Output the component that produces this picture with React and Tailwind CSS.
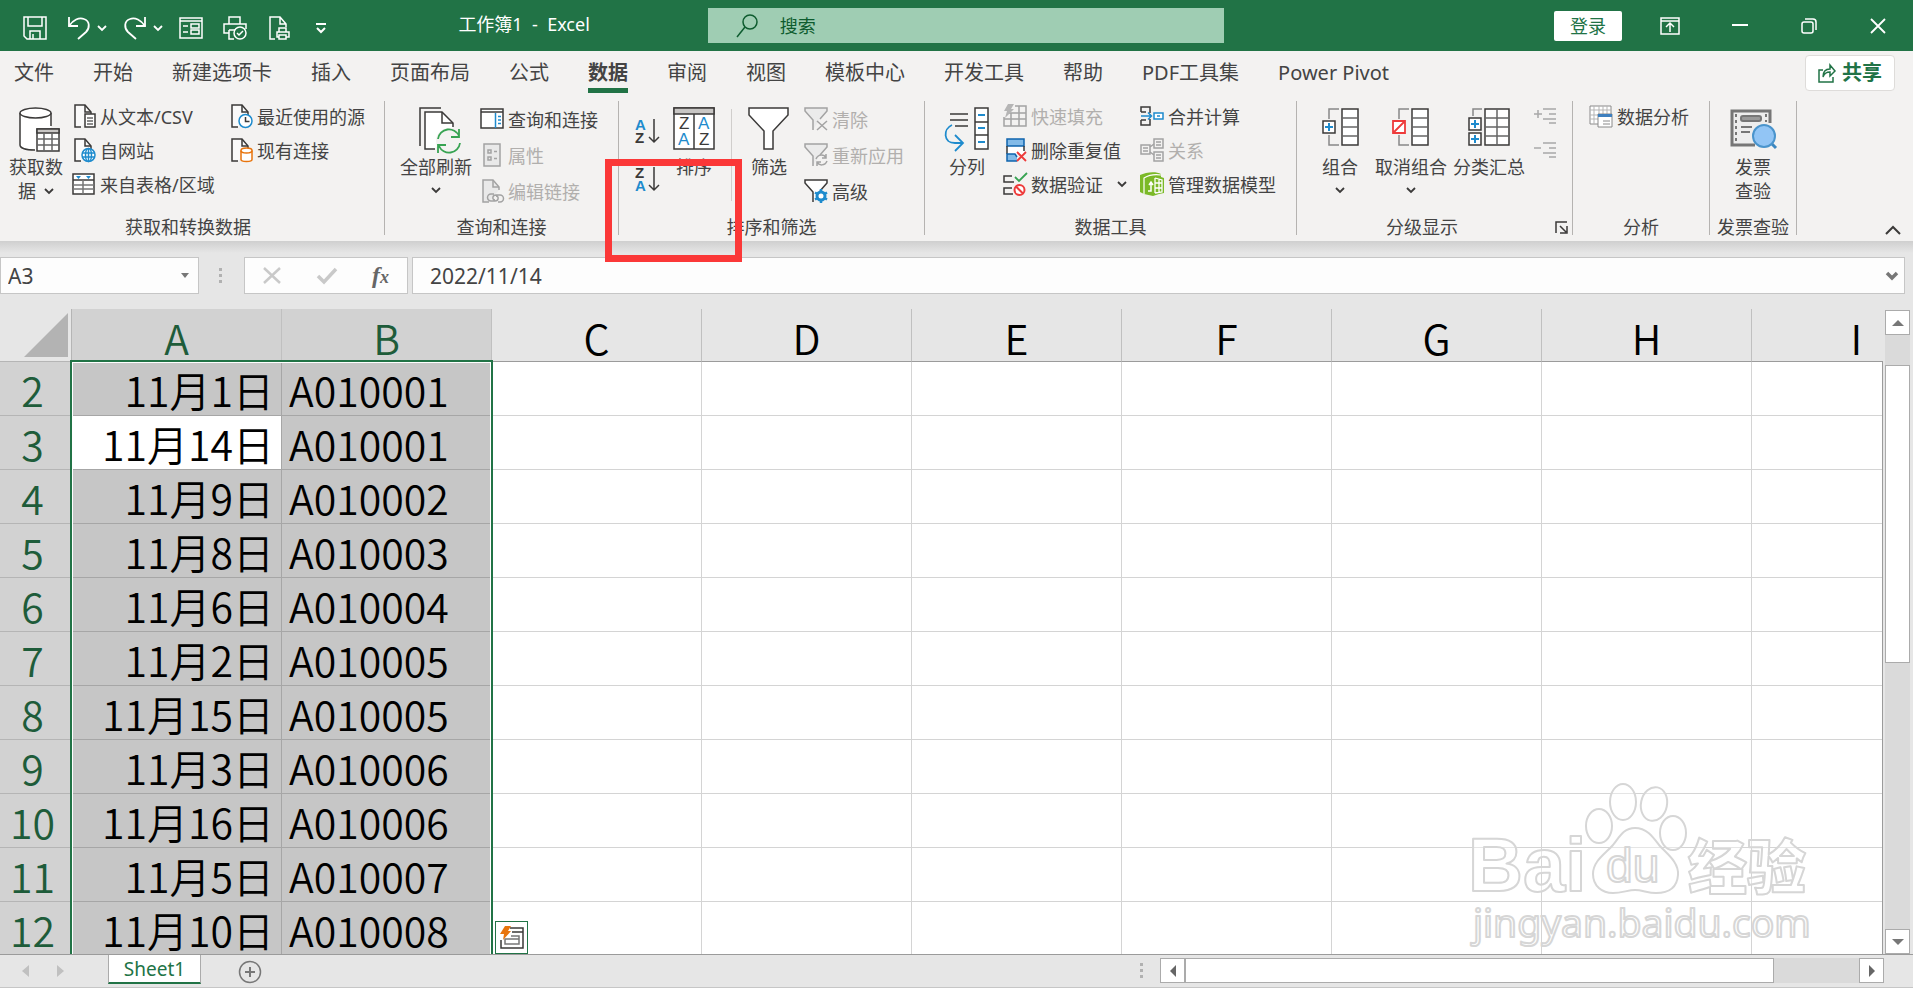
import { useState } from 'react';

const UI_FONT = "font-['Noto_Sans','Noto_Sans_CJK_SC',sans-serif]";
const CELL_FONT = "font-['Noto_Sans_CJK_SC_DemiLight','Noto_Sans_CJK_SC',sans-serif]";

const tabs = [
    '文件', '开始', '新建选项卡', '插入', '页面布局', '公式', '数据', '审阅',
    '视图', '模板中心', '开发工具', '帮助', 'PDF工具集', 'Power Pivot',
];

const columns = ['A', 'B', 'C', 'D', 'E', 'F', 'G', 'H', 'I'];

const rows = [
    { n: 2, date: '11月1日', code: 'A010001' },
    { n: 3, date: '11月14日', code: 'A010001' },
    { n: 4, date: '11月9日', code: 'A010002' },
    { n: 5, date: '11月8日', code: 'A010003' },
    { n: 6, date: '11月6日', code: 'A010004' },
    { n: 7, date: '11月2日', code: 'A010005' },
    { n: 8, date: '11月15日', code: 'A010005' },
    { n: 9, date: '11月3日', code: 'A010006' },
    { n: 10, date: '11月16日', code: 'A010006' },
    { n: 11, date: '11月5日', code: 'A010007' },
    { n: 12, date: '11月10日', code: 'A010008' },
];

const DARK = '#3b3a39';
const BLUE = '#1e8bcd';
const GRAY = '#a3a3a3';
const GREEN = '#37a352';
const RED = '#ee3b3b';

const Svg = ({ size = 24, w, h, children, stroke = DARK, sw = 1.5 }) => (
    <svg
        width={w || size}
        height={h || size}
        viewBox={`0 0 ${w || size} ${h || size}`}
        fill="none"
        stroke={stroke}
        strokeWidth={sw}
        className="shrink-0 overflow-visible"
        aria-hidden="true"
    >
        {children}
    </svg>
);

const Chevron = ({ color = DARK }) => (
    <Svg w={10} h={8} stroke={color} sw={1.8}>
        <path d="M1 2l4 4 4-4" />
    </Svg>
);

/* ---------- title bar icons ---------- */

const SaveIcon = () => (
    <Svg stroke="#fff">
        <path d="M1 1h22v22H4l-3-3z" />
        <path d="M5 1v9h14V1M7 23v-8h10v8" />
        <path d="M10 18v5" />
    </Svg>
);

const UndoIcon = () => (
    <Svg stroke="#fff" sw={1.8}>
        <path d="M2 1v9h9" />
        <path d="M2 10C6 4 12 1 17 3c6 2 6 9 2 13l-8 7" />
    </Svg>
);

const RedoIcon = () => (
    <Svg stroke="#fff" sw={1.8}>
        <path d="M22 1v9h-9" />
        <path d="M22 10C18 4 12 1 7 3c-6 2-6 9-2 13l8 7" />
    </Svg>
);

const FormIcon = () => (
    <Svg stroke="#fff">
        <path d="M1 2h22v20H1zM1 5h22" />
        <path d="M4 10h5M4 16h5M12 8h8v4h-8zM12 14h8v4h-8z" />
    </Svg>
);

const PrintPreviewIcon = () => (
    <Svg stroke="#fff">
        <path d="M6 8V1h11v7M6 17H1V8h22v5M6 14v9h5M6 14h6" />
        <circle cx="17" cy="17" r="6" />
        <path d="M14 17l2 2 4-4" />
    </Svg>
);

const QuickPrintIcon = () => (
    <Svg stroke="#fff">
        <path d="M8 23H3V1h10l6 7v3M13 1v7h6" />
        <path d="M12 16v-4h7v4M12 21h-2v-5h12v5h-3M12 19h7v4h-7z" />
    </Svg>
);

/* ---------- small ribbon icons ---------- */

const DocBase = ({ stroke = DARK, fill = '#fafafa' }) => (
    <>
        <path d="M9 23H3V1h10l6 7v3" fill={fill} stroke={stroke} />
        <path d="M13 1v7h6" stroke={stroke} />
    </>
);

const TextFileIcon = () => (
    <Svg>
        <DocBase />
        <path d="M13 10h10v13H13z" fill="#fff" />
        <path d="M15 14h6M15 17h6M15 20h6" stroke="#666" />
    </Svg>
);

const WebFileIcon = () => (
    <Svg>
        <DocBase />
        <circle cx="16.500" cy="17" r="6.500" fill="#fff" stroke={BLUE} />
        <path d="M10 15h13M10 19h13M16.500 10.500v13" stroke={BLUE} />
        <ellipse cx="16.500" cy="17" rx="3" ry="6.500" stroke={BLUE} />
    </Svg>
);

const TableIcon = () => (
    <Svg>
        <path d="M1 2h21v20H1z" fill="#fff" />
        <path d="M1 8h21" />
        <path d="M1 13h21M1 17h21M11 8v14" stroke="#777" />
        <path d="M4 4h5l-2.500 3zM14 4h5l-2.500 3z" fill={BLUE} stroke="none" />
    </Svg>
);

const RecentIcon = () => (
    <Svg>
        <DocBase />
        <circle cx="16.500" cy="17" r="6.500" fill="#fff" stroke={BLUE} />
        <path d="M16.500 13v4.500h4" />
    </Svg>
);

const ConnectionIcon = () => (
    <Svg>
        <DocBase />
        <path d="M12 12.500v9c0 1 2 2 5.500 2s5.500-1 5.500-2v-9" fill="#fff" stroke="#e8740c" />
        <ellipse cx="17.500" cy="12.500" rx="5.500" ry="2.500" fill="#fff" stroke="#e8740c" />
    </Svg>
);

const PaneIcon = () => (
    <Svg>
        <path d="M1 2h22v19H1z" fill="#fff" />
        <path d="M1 5h22" />
        <path d="M15.500 6v15" stroke={BLUE} />
        <path d="M18 9.500h3M18 13h3M18 16.500h3" stroke={BLUE} />
    </Svg>
);

const PropertiesIcon = () => (
    <Svg stroke={GRAY}>
        <path d="M4 1h16v22H4z" fill="#e9e9e9" />
        <path d="M8 7h3v3H8zM8 14h3v3H8zM14 8.500h3M14 15.500h3" />
    </Svg>
);

const EditLinkIcon = () => (
    <Svg stroke={GRAY}>
        <DocBase stroke={GRAY} fill="#e9e9e9" />
        <path
            d="M14 15h-3a3.500 3.500 0 000 7h4c4 0 4-5 1-5M18 23h2a3.500 3.500 0 000-7h-4c-4 0-4 5-1 5"
            fill="none"
        />
    </Svg>
);

const FunnelBase = ({ stroke, fill }) => (
    <path d="M9 23V13L1 4V1h22v3l-7 8" stroke={stroke} fill={fill} />
);

const ClearIcon = () => (
    <Svg stroke={GRAY}>
        <FunnelBase stroke={GRAY} fill="#ebebeb" />
        <path d="M13 14l10 9M23 14l-10 9" />
    </Svg>
);

const ReapplyIcon = () => (
    <Svg stroke={GRAY}>
        <FunnelBase stroke={GRAY} fill="#ebebeb" />
        <path d="M12 16c2-5 8-5 10-1M22 11v4h-4M23 18c-2 5-8 5-10 1M13 23v-4h4" />
    </Svg>
);

const AdvancedIcon = () => (
    <Svg>
        <FunnelBase stroke={DARK} fill="#fff" />
        <circle cx="17" cy="17" r="4" stroke={BLUE} strokeWidth="3" fill="#fff" />
        <path
            d="M17 10v3M17 21v3M11 13.500l2.500 1.500M20.500 19l2.500 1.500M11 20.500l2.500-1.500M20.500 15l2.500-1.500"
            stroke={BLUE}
            strokeWidth="2.500"
        />
    </Svg>
);

const FlashFillIcon = () => (
    <Svg stroke={GRAY}>
        <path d="M12 2h11v20H1v-9M1 15h22M6 9h17M8 9v13M16 2v20" />
        <path d="M5 0h6L8 5h3l-9 9 2-7H1z" fill="#b5b5b5" stroke="none" />
    </Svg>
);

const RemoveDupIcon = () => (
    <Svg>
        <path d="M4 8h17v8H4z" fill="#fff" stroke="none" />
        <path d="M4 1h17v7H4z" fill="#83bbe8" stroke="#0f64ad" />
        <path d="M4 8v8M21 8v5" />
        <path d="M14 23H4v-7h8l2 3" fill="#83bbe8" stroke="#0f64ad" />
        <path d="M14 14l9 9M23 14l-9 9" stroke={RED} strokeWidth="1.800" />
    </Svg>
);

const ValidationIcon = () => (
    <Svg>
        <path d="M9 4H1v6h10M9 16H1v6h9" />
        <path d="M12 5l4 4 8-8" stroke={GREEN} strokeWidth="1.800" />
        <circle cx="16.500" cy="18" r="5" stroke={RED} strokeWidth="2" fill="#fff" />
        <path d="M13 14.500l7 7" stroke={RED} strokeWidth="2" />
    </Svg>
);

const ConsolidateIcon = () => (
    <Svg>
        <path d="M1 8V3h9v6M1 16v5h9v-6M1 8h5M1 16h5" />
        <path d="M1 12h10M8 8.500l3.500 3.500L8 15.500" stroke={BLUE} />
        <path d="M14 9h9v6h-9zM17 12h3" stroke={BLUE} fill="#fff" />
    </Svg>
);

const RelationIcon = () => (
    <Svg stroke={GRAY}>
        <path d="M1 7h9v9H1zM3 10h5M3 13h5" />
        <path d="M14 1h9v9h-9zM16 4h5M16 7h5M14 14h9v9h-9zM16 17h5M16 20h5" />
        <path d="M10 9l4-3M10 14l4 3" />
    </Svg>
);

const DataModelIcon = () => (
    <Svg>
        <path d="M0 3c6-3 16-4 21-1v3l3 1v15l-5 1-6 2-9-2-4-2z" fill="#7bb928" stroke="none" />
        <path d="M4 22V6c5-3 11-4 17-3" stroke="#fff" strokeWidth="1.200" />
        <path d="M15 6v15M15 11h7M15 16h7M19 7v13M15 6l7 2v12l-7 1" stroke="#fff" strokeWidth="1.300" />
        <path d="M8 19h3v-8M9 13l2-3 2 3" stroke="#fff" />
    </Svg>
);

const AnalysisIcon = () => (
    <Svg stroke="#8a8a8a" sw={1}>
        <path d="M1 2h21v18H1z" fill="#fff" />
        <path d="M1 6h21M1 11h21M1 15h21M5 2v18M10 2v18M14 2v18M18 2v18" stroke="#b5b5b5" />
        <path d="M9 10h14v13H9z" fill="#fff" />
        <path d="M9 10h14v3H9z" fill="#3f80bf" stroke="none" />
        <path d="M14 17h7M14 20h7" />
    </Svg>
);

const IndentIcon = ({ plus }) => (
    <Svg w={24} h={20} stroke="#a8a8a8">
        <path d={plus ? 'M0 6h8M4 2v8' : 'M0 6h7'} />
        <path d="M9 1h13M15 6h7M9 11h13M15 15h7" />
    </Svg>
);

const LauncherIcon = () => (
    <Svg w={13} h={13}>
        <path d="M1 12V1h11M5 5l6 6M12 5v7H5" />
    </Svg>
);

const SortIcon = ({ top, bottom, topColor, bottomColor }) => (
    <Svg>
        <g fontSize="15" stroke="none" className="font-['Liberation_Sans',sans-serif] font-bold">
            <text x="0" y="11" fill={topColor}>{top}</text>
            <text x="0" y="24" fill={bottomColor}>{bottom}</text>
        </g>
        <path d="M19 0v23M14 18l5 5 5-5" />
    </Svg>
);

/* ---------- large ribbon icons ---------- */

const GetDataIcon = () => (
    <Svg size={48}>
        <path d="M24 43c-9 0-16-2-16-5V6h31v14" fill="#fff" stroke="none" />
        <path d="M23 43C14 43 8 41 8 38V6M39 6v13" />
        <ellipse cx="23.500" cy="6" rx="15.500" ry="5" fill="#fff" />
        <path d="M25 22h22v22H25z" fill="#fff" />
        <path d="M25 22h22v4H25z" fill="#c8c6c4" />
        <path d="M25 32h22M25 38h22M32 26v18M40 26v18" stroke="#666" />
    </Svg>
);

const RefreshAllIcon = () => (
    <Svg size={48}>
        <path d="M8 39V1h21" />
        <path d="M23 42H13V5h17l11 11v4" fill="#fff" />
        <path d="M30 5v11h11" />
        <circle cx="37" cy="34" r="13" fill="#f3f2f1" stroke="none" />
        <path d="M26 32a11 11 0 0121-3M47 22v8h-8M48 36a11 11 0 01-21 3M26 46v-8h8" stroke={GREEN} strokeWidth="1.800" />
    </Svg>
);

const SortDialogIcon = () => (
    <Svg size={48}>
        <path d="M4 1h40v41H4z" fill="#fff" />
        <path d="M4 1h40v6H4z" fill="#c8c6c4" />
        <path d="M24 7v35" />
        <g fontSize="17" stroke="none" className="font-['Liberation_Sans',sans-serif]">
            <text x="9" y="22" fill={DARK}>Z</text>
            <text x="8" y="38" fill={BLUE}>A</text>
            <text x="28" y="22" fill={BLUE}>A</text>
            <text x="29" y="38" fill={DARK}>Z</text>
        </g>
    </Svg>
);

const FilterIcon = () => (
    <Svg size={48}>
        <path d="M4 1h39v7L28 24v18h-9V24L4 8z" fill="#fff" />
    </Svg>
);

const SplitIcon = () => (
    <Svg size={48}>
        <path d="M7 7h18M7 13h18M12 19h13" />
        <path d="M9 18c-9 4-9 18 3 18h8M12 28l8 8-8 8" stroke={BLUE} strokeWidth="1.800" />
        <path d="M32 1h13v41H32zM32 15h13M32 28h13" fill="#fff" />
        <path d="M35 8h7M35 21h7M35 35h7" stroke={BLUE} strokeWidth="1.800" />
    </Svg>
);

const GroupIcon = () => (
    <Svg size={48}>
        <path d="M23 2H13v10M13 28v10h10" stroke="#888" />
        <path d="M7 14h12v12H7z" fill="#fff" />
        <path d="M9 20h8M13 16v8" stroke={BLUE} strokeWidth="2" />
        <path d="M26 2h16v36H26z" fill="#fff" />
        <path d="M26 11h16M26 20h16M26 29h16" stroke="#666" />
    </Svg>
);

const UngroupIcon = () => (
    <Svg size={48}>
        <path d="M22 2H12v10M12 28v10h10" stroke="#888" />
        <path d="M6 14h12v12H6zM6 26l12-12" fill="#fff" stroke={RED} strokeWidth="1.800" />
        <path d="M25 2h16v36H25z" fill="#fff" />
        <path d="M25 11h16M25 20h16M25 29h16" stroke="#666" />
    </Svg>
);

const SubtotalIcon = () => (
    <Svg size={48}>
        <path d="M17 2H8v7" stroke="#888" />
        <path d="M4 11h12v12H4zM4 26h12v12H4z" fill="#fff" />
        <path d="M6 17h8M10 13v8M6 32h8M10 28v8" stroke={BLUE} strokeWidth="2" />
        <path d="M20 2h24v36H20z" fill="#fff" />
        <path d="M20 11h24M20 20h24M20 29h24M32 2v36" stroke="#666" />
    </Svg>
);

const InvoiceIcon = () => (
    <Svg size={48} stroke="#767676" sw={3}>
        <path d="M26 38H3V4h38v12" fill="#ededed" />
        <path d="M7 7v30M37 7v8" strokeWidth="2" strokeDasharray="3 3" />
        <rect x="12" y="9" width="20" height="5" rx="2" fill="#999" strokeWidth="2" />
        <path d="M12 20h11M12 25h9" strokeWidth="2" />
        <path d="M42 36l5 5" stroke="#3c87c0" />
        <circle cx="35" cy="29" r="11" fill="#92c5f5" stroke="#4a94cc" strokeWidth="2" />
    </Svg>
);

/* ---------- ribbon building blocks ---------- */

const Group = ({ label, width, children, launcher }) => (
    <section className={`${width} flex h-[134px] shrink-0 flex-col border-r border-[#b5b3b1]`}>
        <div className="flex flex-1">{children}</div>
        <div className="flex items-center text-[18px] leading-[16px]">
            <span className="flex-1 text-center">{label}</span>
            {launcher && (
                <button aria-label="分级显示设置" className="mr-1 ml-2">
                    <LauncherIcon />
                </button>
            )}
        </div>
    </section>
);

const BigButton = ({ icon: Icon, width, children, drop }) => (
    <button className={`${width} flex shrink-0 flex-col items-center self-start pt-1.5 text-[18px] leading-[24px] whitespace-nowrap`}>
        <Icon />
        {children}
        {drop && <span className="flex h-[22px] items-center"><Chevron /></span>}
    </button>
);

const SmallButton = ({ icon: Icon, label, disabled, drop }) => (
    <button
        disabled={disabled}
        className={`flex h-[30px] items-center gap-1 text-[18px] leading-[24px] whitespace-nowrap ${disabled ? 'text-[#b1afad]' : ''}`}
    >
        <Icon />
        <span className="pt-0.5">{label}</span>
        {drop && <span className="ml-2.5"><Chevron /></span>}
    </button>
);

const TitleBar = () => (
    <header className="flex h-[51px] shrink-0 items-center bg-[#217346] text-white">
        <div className="flex w-[37%] shrink-0 items-center pl-[23px]">
            <div className="flex items-center pt-1">
                <button aria-label="保存"><SaveIcon /></button>
                <button aria-label="撤消" className="ml-5 flex items-center gap-1.5">
                    <UndoIcon />
                    <Chevron color="#fff" />
                </button>
                <button aria-label="恢复" className="ml-4 flex items-center gap-1.5">
                    <RedoIcon />
                    <Chevron color="#fff" />
                </button>
                <button aria-label="记录单" className="ml-4"><FormIcon /></button>
                <button aria-label="打印预览" className="ml-5"><PrintPreviewIcon /></button>
                <button aria-label="快速打印" className="ml-5"><QuickPrintIcon /></button>
                <button aria-label="自定义快速访问工具栏" className="ml-6">
                    <Svg w={12} h={12} stroke="#fff" sw={2}>
                        <path d="M1 2h10M2 6l4 4 4-4" />
                    </Svg>
                </button>
            </div>
            <h1 className="mr-[118px] mb-1 ml-auto text-[18px] leading-[24px] whitespace-pre">工作簿1  -  Excel</h1>
        </div>
        <label className="flex h-[35px] w-[27%] items-center bg-[#9fcdb3] pl-[28px] text-[#0e5c2f]">
            <Svg w={22} h={24} stroke="#0e5c2f">
                <circle cx="14" cy="8" r="7" />
                <path d="M9 13L1 23" />
            </Svg>
            <input
                aria-label="搜索"
                placeholder="搜索"
                className="ml-[22px] min-w-0 flex-1 bg-transparent text-[18px] leading-[24px] outline-none placeholder:text-[#0e5c2f]"
            />
        </label>
        <div className="ml-auto flex items-center pr-[27px]">
            <button className="h-[30px] w-[68px] rounded-xs bg-white text-[18px] leading-[24px] text-[#217346]">登录</button>
            <button aria-label="功能区显示选项" className="ml-[38px]">
                <Svg w={20} h={18} stroke="#fff">
                    <path d="M1 1h18v16H1zM1 4h18M10 15V7M6 10l4-4 4 4" />
                </Svg>
            </button>
            <button aria-label="最小化" className="ml-[52px]">
                <Svg w={16} h={16} stroke="#fff" sw={2}><path d="M0 7h16" /></Svg>
            </button>
            <button aria-label="向下还原" className="ml-[53px]">
                <Svg w={16} h={16} stroke="#fff">
                    <rect x="1" y="4" width="11" height="11" rx="2" />
                    <path d="M4 1h8a3 3 0 013 3v8" />
                </Svg>
            </button>
            <button aria-label="关闭" className="ml-[53px]">
                <Svg w={16} h={16} stroke="#fff" sw={1.8}><path d="M1 1l14 14M15 1L1 15" /></Svg>
            </button>
        </div>
    </header>
);

const TabRow = ({ active, onSelect }) => (
    <nav className="flex h-[50px] items-start justify-between pr-[18px] pl-[14px]">
        <div className="flex gap-[39px]">
            {tabs.map((tab) => (
                <button
                    key={tab}
                    onClick={() => onSelect(tab)}
                    className={`h-[42px] border-b-[5px] pt-1.5 text-[20px] leading-[30px] whitespace-nowrap ${
                        tab === active ? 'border-[#217346] font-bold' : 'border-transparent'
                    }`}
                >
                    {tab}
                </button>
            ))}
        </div>
        <button className="mt-1 flex h-[36px] w-[90px] items-center justify-center gap-1.5 rounded border border-[#dedcda] bg-white text-[20px] leading-[30px] font-bold text-[#217346]">
            <Svg w={18} h={20} stroke="#217346">
                <path d="M5 7H1v12h14v-5" />
                <path d="M5 14c0-6 3-8 7-8V2l5 6-5 5V9c-4 0-6 2-7 5z" />
            </Svg>
            共享
        </button>
    </nav>
);

const Ribbon = () => (
    <div className="relative flex pb-1.5">
        <Group label="获取和转换数据" width="w-[385px] pr-2">
            <div className="flex pl-1.5">
                <BigButton icon={GetDataIcon} width="w-[60px]">
                    <span>获取数</span>
                    <span className="flex items-center gap-2">据<Chevron /></span>
                </BigButton>
                <div className="ml-1.5 flex w-[157px] flex-col gap-1">
                    <SmallButton icon={TextFileIcon} label="从文本/CSV" />
                    <SmallButton icon={WebFileIcon} label="自网站" />
                    <SmallButton icon={TableIcon} label="来自表格/区域" />
                </div>
                <div className="flex flex-col gap-1">
                    <SmallButton icon={RecentIcon} label="最近使用的源" />
                    <SmallButton icon={ConnectionIcon} label="现有连接" />
                </div>
            </div>
        </Group>

        <Group label="查询和连接" width="w-[234px]">
            <div className="flex pl-[11px]">
                <BigButton icon={RefreshAllIcon} width="w-[80px]" drop>全部刷新</BigButton>
                <div className="ml-1 flex flex-col gap-1.5 pt-[3px]">
                    <SmallButton icon={PaneIcon} label="查询和连接" />
                    <SmallButton icon={PropertiesIcon} label="属性" disabled />
                    <SmallButton icon={EditLinkIcon} label="编辑链接" disabled />
                </div>
            </div>
        </Group>

        <Group label="排序和筛选" width="w-[306px]">
            <div className="flex pl-4">
                <div className="flex flex-col gap-6 pt-[18px]">
                    <button aria-label="升序"><SortIcon top="A" bottom="Z" topColor={BLUE} bottomColor={DARK} /></button>
                    <button aria-label="降序"><SortIcon top="Z" bottom="A" topColor={DARK} bottomColor={BLUE} /></button>
                </div>
                <div className="ml-2.5 flex">
                    <BigButton icon={SortDialogIcon} width="w-[50px]">排序</BigButton>
                </div>
                <div className="mx-3 mt-2 h-[92px] w-px bg-[#d0cecc]" />
                <BigButton icon={FilterIcon} width="w-[50px]">筛选</BigButton>
                <div className="ml-2.5 flex flex-col gap-1.5 pt-[3px]">
                    <SmallButton icon={ClearIcon} label="清除" disabled />
                    <SmallButton icon={ReapplyIcon} label="重新应用" disabled />
                    <SmallButton icon={AdvancedIcon} label="高级" />
                </div>
            </div>
        </Group>

        <Group label="数据工具" width="w-[372px]">
            <div className="flex pl-[17px]">
                <BigButton icon={SplitIcon} width="w-[50px]">分列</BigButton>
                <div className="ml-[11px] flex w-[137px] flex-col gap-1">
                    <SmallButton icon={FlashFillIcon} label="快速填充" disabled />
                    <SmallButton icon={RemoveDupIcon} label="删除重复值" />
                    <SmallButton icon={ValidationIcon} label="数据验证" drop />
                </div>
                <div className="flex flex-col gap-1">
                    <SmallButton icon={ConsolidateIcon} label="合并计算" />
                    <SmallButton icon={RelationIcon} label="关系" disabled />
                    <SmallButton icon={DataModelIcon} label="管理数据模型" />
                </div>
            </div>
        </Group>

        <Group label="分级显示" width="w-[276px]" launcher>
            <div className="flex pl-[18px]">
                <BigButton icon={GroupIcon} width="w-[50px]" drop>组合</BigButton>
                <div className="ml-2 flex">
                    <BigButton icon={UngroupIcon} width="w-[76px]" drop>取消组合</BigButton>
                </div>
                <div className="ml-0.5 flex">
                    <BigButton icon={SubtotalIcon} width="w-[76px]">分类汇总</BigButton>
                </div>
                <div className="ml-[7px] flex flex-col gap-3.5 pt-[7px]">
                    <button disabled aria-label="显示明细数据"><IndentIcon plus /></button>
                    <button disabled aria-label="隐藏明细数据"><IndentIcon /></button>
                </div>
            </div>
        </Group>

        <Group label="分析" width="w-[137px]">
            <div className="pl-4">
                <SmallButton icon={AnalysisIcon} label="数据分析" />
            </div>
        </Group>

        <Group label="发票查验" width="w-[87px]">
            <div className="flex flex-1 justify-center">
                <BigButton icon={InvoiceIcon} width="w-[50px]">
                    <span>发票</span>
                    <span>查验</span>
                </BigButton>
            </div>
        </Group>

        <button aria-label="折叠功能区" className="mr-3 ml-auto self-end">
            <Svg w={16} h={10} sw={2}><path d="M1 9l7-7 7 7" /></Svg>
        </button>

        {/* highlight box around the sort buttons */}
        <div className="pointer-events-none absolute top-[58px] left-[605px] z-20 h-[103px] w-[137px] border-[7px] border-[#fb3838]" />
    </div>
);

const FormulaBar = () => (
    <div className="flex h-[68px] shrink-0 items-start bg-[linear-gradient(#cfcfcf,#e6e6e6_12px)] pt-4 pr-2 text-[#444]">
        <div className="flex h-[37px] w-[199px] items-center border border-[#c6c6c6] bg-[#fdfdfd] pr-2 pl-[7px]">
            <input aria-label="名称框" defaultValue="A3" className="min-w-0 flex-1 bg-transparent text-[21px] leading-[30px] outline-none" />
            <Svg w={10} h={6}><path d="M1 0h8L5 5z" fill="#777" stroke="none" /></Svg>
        </div>
        <div className="mx-5 flex h-[37px] flex-col justify-center gap-[3px]">
            <span className="size-[3px] bg-[#b1b1b1]" />
            <span className="size-[3px] bg-[#b1b1b1]" />
            <span className="size-[3px] bg-[#b1b1b1]" />
        </div>
        <div className="ml-0.5 flex h-[37px] w-[164px] items-center justify-between border border-[#c6c6c6] bg-[#fdfdfd] pr-[18px] pl-[18px]">
            <button aria-label="取消">
                <Svg w={18} h={18} stroke="#c9c9c9" sw={2.5}><path d="M1 1l16 15M17 1L1 16" /></Svg>
            </button>
            <button aria-label="输入">
                <Svg w={20} h={18} stroke="#c9c9c9" sw={3.5}><path d="M1 9l6 6L19 2" /></Svg>
            </button>
            <button aria-label="插入函数" className="font-['Liberation_Serif',serif] text-[24px] leading-[30px] font-bold text-[#666] italic">
                f<span className="text-[18px]">x</span>
            </button>
        </div>
        <div className="ml-1 flex h-[37px] flex-1 items-center border border-[#c6c6c6] bg-[#fdfdfd] pr-[5px] pl-[17px]">
            <input aria-label="编辑栏" defaultValue="2022/11/14" className="min-w-0 flex-1 bg-transparent text-[21px] leading-[30px] outline-none" />
            <button aria-label="展开编辑栏">
                <Svg w={14} h={10} stroke="#777" sw={3.5}><path d="M2 2l5 5 5-5" /></Svg>
            </button>
        </div>
    </div>
);

const cellClass = (row, col) => {
    if (col === 'A') {
        return `${row.n === 3 ? 'bg-white' : 'bg-[#c6c6c6]'} border-[#a6a6a6] pr-[7px] text-right`;
    }
    if (col === 'B') return 'border-[#a6a6a6] bg-[#c6c6c6] pl-[7px] text-left';
    return 'border-[#d4d4d4] bg-white';
};

const Grid = () => (
    <div className="relative min-w-0 flex-1 overflow-hidden bg-white">
        <table className={`${CELL_FONT} w-[1962px] table-fixed border-separate border-spacing-0 text-[41px] leading-[51px] font-light text-black`}>
            <colgroup>
                <col className="w-[72px]" />
                {columns.map((c) => <col key={c} className="w-[210px]" />)}
            </colgroup>
            <thead>
                <tr className="h-[53px]">
                    <th className="border-r border-b border-[#b5b5b5] bg-[#e6e6e6] p-0 pr-[3px] pb-1 align-bottom">
                        <span className="ml-auto block h-[44px] w-[44px] bg-[#b3b3b3] [clip-path:polygon(100%_0,100%_100%,0_100%)]" />
                    </th>
                    {columns.map((c) => (
                        <th
                            key={c}
                            scope="col"
                            className={`border-r border-b border-r-[#c0c0c0] border-b-[#9b9b9b] p-0 pt-1 leading-[48px] font-light ${
                                c === 'A' || c === 'B' ? 'bg-[#d2d2d2] text-[#1e5c3a]' : 'bg-[#e6e6e6]'
                            }`}
                        >
                            {c}
                        </th>
                    ))}
                </tr>
            </thead>
            <tbody>
                {rows.map((row) => (
                    <tr key={row.n} className="h-[54px]">
                        <th scope="row" className="border-r border-b border-[#b5b5b5] bg-[#d2d2d2] p-0 pt-0.5 pr-1.5 font-light text-[#1e5c3a]">
                            {row.n}
                        </th>
                        {columns.map((c) => (
                            <td key={c} className={`border-r border-b p-0 pt-0.5 whitespace-nowrap ${cellClass(row, c)}`}>
                                {c === 'A' && row.date}
                                {c === 'B' && row.code}
                            </td>
                        ))}
                    </tr>
                ))}
            </tbody>
        </table>

        {/* selection frame, runs past the last visible row */}
        <div className="pointer-events-none absolute top-[51px] -bottom-2 left-[70px] w-[423px] border-2 border-[#217346] shadow-[inset_0_0_0_1px_#fff]" />

        <button aria-label="快速分析" className="absolute bottom-0 left-[495px] flex h-[33px] w-[33px] items-center justify-center border border-[#217346] bg-white">
            <Svg>
                <path d="M10 2h13v20H1v-8M12 6h11" />
                <path d="M11 10h8v3M5 13h14v5H5z" stroke="#777" />
                <path d="M5 0h6L8 5h3l-8 9 1-6H0z" fill="#e8740c" stroke="none" />
            </Svg>
        </button>
    </div>
);

const VerticalScroll = () => (
    <div className="flex w-[30px] flex-col bg-[#e6e6e6] pt-px pr-[3px] pl-0.5">
        <button aria-label="向上滚动" className="flex h-[25px] shrink-0 items-center justify-center border border-[#ababab] bg-white">
            <Svg w={12} h={6}><path d="M0 6l6-6 6 6z" fill="#777" stroke="none" /></Svg>
        </button>
        <div className="flex-1 bg-[#dadada] pt-[30px]">
            <div className="h-[298px] border border-[#ababab] bg-white" />
        </div>
        <button aria-label="向下滚动" className="flex h-[25px] shrink-0 items-center justify-center border border-[#ababab] bg-white">
            <Svg w={12} h={6}><path d="M0 0l6 6 6-6z" fill="#777" stroke="none" /></Svg>
        </button>
    </div>
);

const SheetBar = () => (
    <footer className="flex h-[34px] shrink-0 items-start border-t border-b border-t-[#9b9b9b] border-b-[#c6c6c6] bg-[#e6e6e6] pr-[29px]">
        <div className="flex h-[32px] w-[108px] items-center gap-7 pl-[22px]">
            <button aria-label="上一个工作表"><Svg w={7} h={12}><path d="M7 0v12L0 6z" fill="#c0c0c0" stroke="none" /></Svg></button>
            <button aria-label="下一个工作表"><Svg w={7} h={12}><path d="M0 0v12l7-6z" fill="#c0c0c0" stroke="none" /></Svg></button>
        </div>
        <button className="h-[29px] w-[93px] border-x border-b-2 border-x-[#ababab] border-b-[#217346] bg-white text-[19px] leading-[24px] text-[#217346]">
            Sheet1
        </button>
        <button aria-label="新工作表" className="ml-[37px] pt-[5px]">
            <Svg stroke="#777"><circle cx="12" cy="12" r="10.500" /><path d="M7 12h10M12 7v10" strokeWidth="2" /></Svg>
        </button>
        <div className="ml-auto flex pt-[3px]">
            <div className="flex w-5 flex-col justify-center gap-[3px]">
                <span className="size-[3px] bg-[#b1b1b1]" />
                <span className="size-[3px] bg-[#b1b1b1]" />
                <span className="size-[3px] bg-[#b1b1b1]" />
            </div>
            <div className="flex h-[25px] w-[724px] bg-[#dadada]">
                <button aria-label="向左滚动" className="flex w-[25px] items-center justify-center border border-[#ababab] bg-white">
                    <Svg w={6} h={12}><path d="M6 0v12L0 6z" fill="#666" stroke="none" /></Svg>
                </button>
                <div className="w-[589px] border border-[#ababab] bg-white" />
                <button aria-label="向右滚动" className="ml-auto flex w-[25px] items-center justify-center border border-[#ababab] bg-white">
                    <Svg w={6} h={12}><path d="M0 0v12l6-6z" fill="#666" stroke="none" /></Svg>
                </button>
            </div>
        </div>
    </footer>
);

const Watermark = () => (
    <svg
        width="360"
        height="180"
        viewBox="0 0 360 180"
        className="pointer-events-none absolute right-[93px] bottom-[27px] z-10"
        fill="#ffffff"
        fillOpacity="0.400"
        stroke="#d6d6d6"
        strokeWidth="2"
        strokeLinejoin="round"
        aria-hidden="true"
    >
        <text x="8" y="110" fontSize="76" className="font-['Liberation_Sans',sans-serif] font-bold">Bai</text>
        <ellipse cx="139" cy="45" rx="13" ry="17" />
        <ellipse cx="163" cy="21" rx="13" ry="18" />
        <ellipse cx="194" cy="23" rx="13" ry="17" transform="rotate(12 194 23)" />
        <ellipse cx="213" cy="52" rx="13" ry="17" />
        <path d="M175 47c12 0 18 9 24 17 8 9 20 17 19 30-1 14-11 18-22 18-8 0-14-3-21-3s-13 3-22 3c-11 0-20-7-20-19 0-13 12-20 20-29 7-9 11-17 22-17z" />
        <text x="146" y="101" fontSize="48" className="font-['Liberation_Sans',sans-serif]">du</text>
        <text x="228" y="108" fontSize="59" className="font-['Noto_Sans_CJK_SC',sans-serif] font-black">经验</text>
        <text x="13" y="156" fontSize="39" className="font-['Noto_Sans',sans-serif]">jingyan.baidu.com</text>
    </svg>
);

const App = () => {
    const [activeTab, setActiveTab] = useState('数据');

    return (
        <div className={`${UI_FONT} relative flex h-screen flex-col overflow-hidden bg-[#e6e6e6] text-[#444]`}>
            <TitleBar />
            <div className="shrink-0 bg-[#f3f2f1]">
                <TabRow active={activeTab} onSelect={setActiveTab} />
                <Ribbon />
            </div>
            <FormulaBar />
            <main className="flex min-h-0 flex-1">
                <Grid />
                <div className="mt-[52px] w-px bg-[#9b9b9b]" />
                <VerticalScroll />
            </main>
            <SheetBar />
            <Watermark />
        </div>
    );
};

export default App;
